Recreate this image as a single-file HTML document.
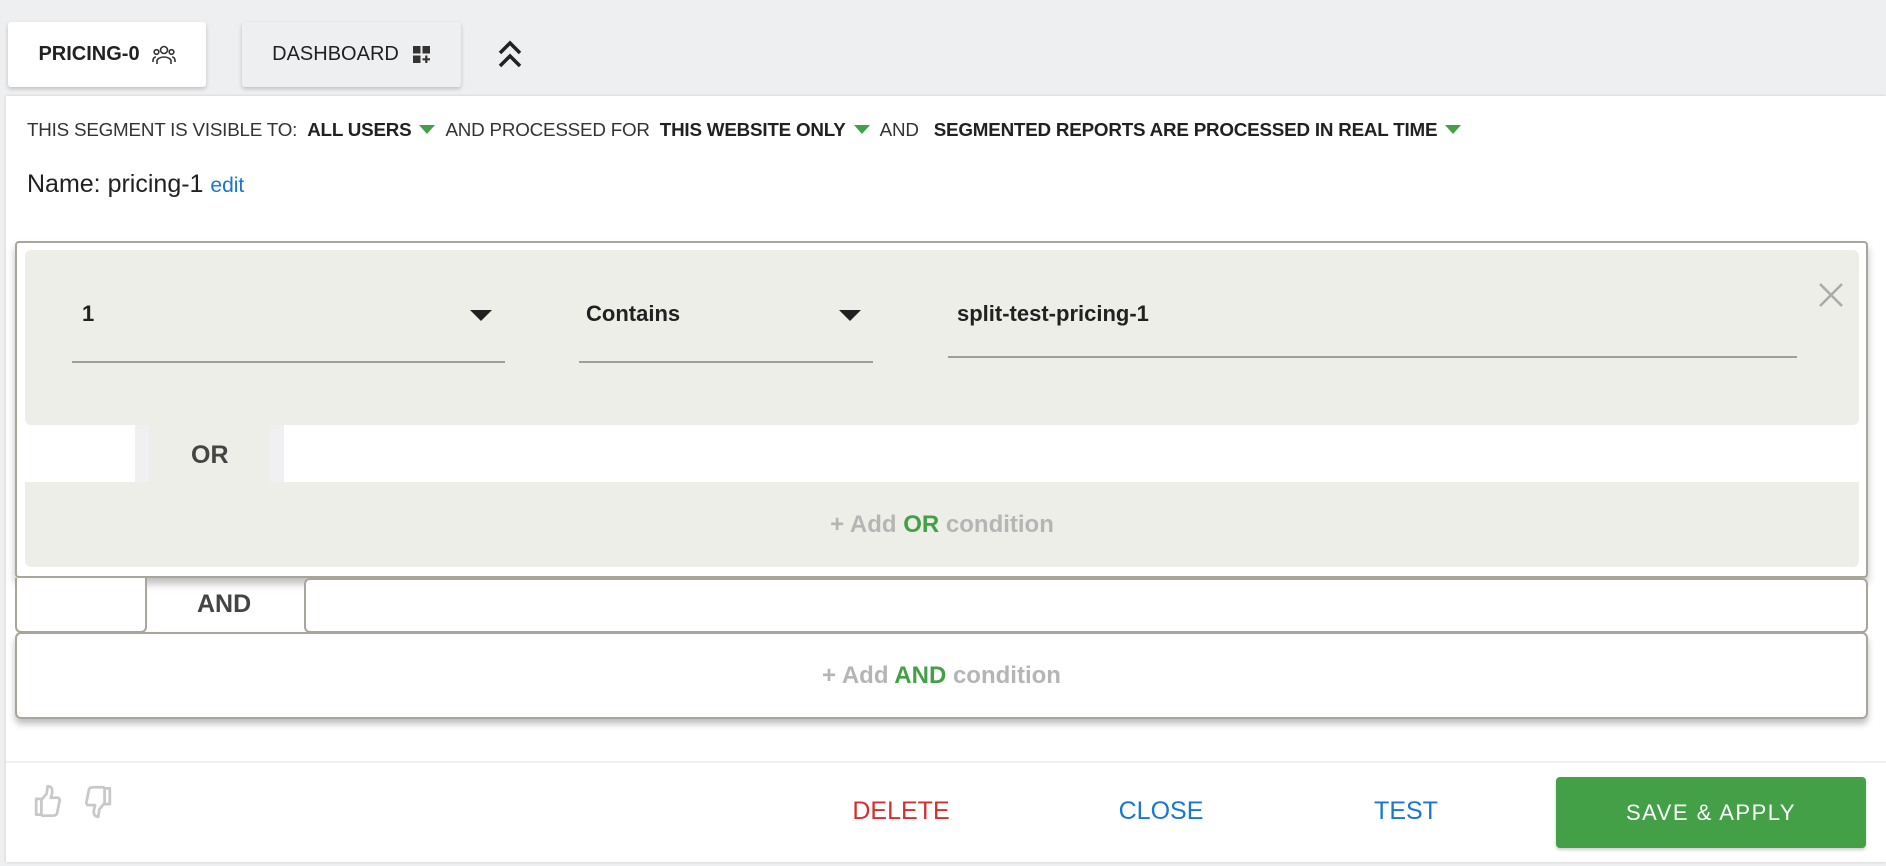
<!DOCTYPE html>
<html><head><meta charset="utf-8"><style>
*{box-sizing:border-box;margin:0;padding:0}
body{width:1886px;height:866px;background:#eeeff1;font-family:"Liberation Sans",Roboto,sans-serif;position:relative;overflow:hidden;color:#212121}
.abs{position:absolute}
.tab{position:absolute;top:22px;height:65px;border-radius:3px;box-shadow:0 2px 4px rgba(0,0,0,.2);display:flex;align-items:center;justify-content:center;font-size:20px;color:#212121}
.panel{position:absolute;left:6px;top:96px;width:1880px;height:766px;background:#fff;box-shadow:0 0 3px rgba(0,0,0,.15)}
.tri{display:inline-block;width:0;height:0;border-left:8px solid transparent;border-right:8px solid transparent;border-top:9px solid #43a047;margin:0 10px 3px 8px;vertical-align:middle}
.btri{position:absolute;width:0;height:0;border-left:11px solid transparent;border-right:11px solid transparent;border-top:11px solid #212121}
.ul{position:absolute;height:2px;background:#9e9e9e}
.fld{position:absolute;font-size:22px;font-weight:bold;color:#212121}
.btn{position:absolute;font-size:25px;top:797px;transform:translateX(-50%)}
</style></head><body>
<div class="tab" style="left:8px;width:198px;background:#fff;font-weight:bold">PRICING-0
<svg width="24" height="22" viewBox="0 0 24 22" style="margin-left:12px" fill="none" stroke="#333" stroke-width="1.6"><circle cx="12" cy="6" r="3.5"/><path d="M5 20v-3a7 4 0 0 1 14 0v3"/><circle cx="4.5" cy="8" r="2.3"/><circle cx="19.5" cy="8" r="2.3"/><path d="M1 18v-2a3 3 0 0 1 3-3M23 18v-2a3 3 0 0 0-3-3"/></svg></div>
<div class="tab" style="left:242px;width:219px;background:#eeeff1">DASHBOARD
<svg width="18" height="18" viewBox="0 0 18 18" style="margin-left:14px" fill="#333"><rect x="0" y="0" width="7.5" height="7.5"/><rect x="9.5" y="0" width="7.5" height="7.5"/><rect x="0" y="9.5" width="7.5" height="7.5"/><path d="M12.2 9.5h2.2v2.7h2.6v2.2h-2.6v2.6h-2.2v-2.6h-2.7v-2.2h2.7z"/></svg></div>
<svg class="abs" style="left:497px;top:39px" width="26" height="30" viewBox="0 0 26 30" fill="none" stroke="#222" stroke-width="3.5"><path d="M3 14l10-10 10 10M3 27l10-10 10 10"/></svg>
<div class="panel">
<div class="abs" style="left:21px;top:23px;font-size:18.8px;color:#333;white-space:nowrap;letter-spacing:-0.2px">THIS SEGMENT IS VISIBLE TO:&nbsp; <b style="color:#212121">ALL USERS</b><span class="tri"></span>AND PROCESSED FOR&nbsp; <b style="color:#212121">THIS WEBSITE ONLY</b><span class="tri"></span>AND&nbsp;&nbsp; <b style="color:#212121">SEGMENTED REPORTS ARE PROCESSED IN REAL TIME</b><span class="tri"></span></div>
<div class="abs" style="left:21px;top:74px;font-size:25px;color:#212121">Name: pricing-1 <span style="color:#1976d2;font-size:21px">edit</span></div>
</div>
<div class="abs" style="left:15px;top:241px;width:1853px;height:337px;border:2px solid #aaa59b;border-radius:4px;box-shadow:0 6px 8px rgba(0,0,0,.25);background:#fff"></div>
<div class="abs" style="left:25px;top:250px;width:1834px;height:175px;background:#eeeee9;border-radius:6px"></div>
<div class="fld" style="left:82px;top:301px">1</div>
<div class="btri" style="left:470px;top:310px"></div>
<div class="ul" style="left:72px;top:361px;width:433px"></div>
<div class="fld" style="left:586px;top:301px">Contains</div>
<div class="btri" style="left:839px;top:310px"></div>
<div class="ul" style="left:579px;top:361px;width:294px"></div>
<div class="fld" style="left:957px;top:301px">split-test-pricing-1</div>
<div class="ul" style="left:948px;top:356px;width:849px"></div>
<svg class="abs" style="left:1818px;top:282px" width="26" height="26" viewBox="0 0 26 26" stroke="#aaa" stroke-width="2.5"><path d="M2 2l22 22M24 2L2 24"/></svg>
<div class="abs" style="left:135px;top:425px;width:149px;height:58px;background:#eeeee9;border-left:14px solid #f0f0f2;border-right:14px solid #f0f0f2"></div>
<div class="abs" style="left:191px;top:441px;font-size:25px;font-weight:bold;color:#444">OR</div>
<div class="abs" style="left:25px;top:482px;width:1834px;height:85px;background:#eeeee9;border-radius:0 0 6px 6px;font-size:24px;font-weight:bold;color:#b5b5b5;text-align:center;line-height:85px">+ Add <span style="color:#43a047">OR</span> condition</div>
<div class="abs" style="left:15px;top:578px;width:132px;height:55px;border:2px solid #aaa59b;border-top:none;border-radius:0 0 6px 6px;background:#fff"></div>
<div class="abs" style="left:197px;top:590px;font-size:25px;font-weight:bold;color:#444">AND</div>
<div class="abs" style="left:304px;top:578px;width:1564px;height:55px;border:2px solid #aaa59b;border-radius:6px;background:#fff"></div>
<div class="abs" style="left:15px;top:632px;width:1853px;height:87px;border:2px solid #aaa59b;border-radius:6px;background:#fff;box-shadow:0 5px 7px rgba(0,0,0,.25);font-size:24px;font-weight:bold;color:#b5b5b5;text-align:center;line-height:83px">+ Add <span style="color:#43a047">AND</span> condition</div>
<div class="abs" style="left:6px;top:761px;width:1880px;height:2px;background:#f0f0f0"></div>
<svg class="abs" style="left:33px;top:782px" width="80" height="40" viewBox="0 0 76 34" fill="none" stroke="#c8c8c8" stroke-width="2.6" stroke-linejoin="round"><path d="M3 14h5v15H3zM8 15l5-6 1-7c3 0 5 2 4 7l-1 4h6c2 0 3 2 2 4l-2 10c0 2-2 3-4 3H8"/><path d="M73 19h-5V4h5zM68 18l-5 6-1 7c-3 0-5-2-4-7l1-4h-6c-2 0-3-2-2-4l2-10c0-2 2-3 4-3h11"/></svg>
<div class="btn" style="left:901px;color:#d32f2f">DELETE</div>
<div class="btn" style="left:1161px;color:#1976d2">CLOSE</div>
<div class="btn" style="left:1406px;color:#1976d2">TEST</div>
<div class="abs" style="left:1556px;top:777px;width:310px;height:71px;background:#43a047;border-radius:4px;box-shadow:0 2px 3px rgba(0,0,0,.2);color:#fff;font-size:22px;letter-spacing:1.5px;text-align:center;line-height:71px">SAVE &amp; APPLY</div>
</body></html>
